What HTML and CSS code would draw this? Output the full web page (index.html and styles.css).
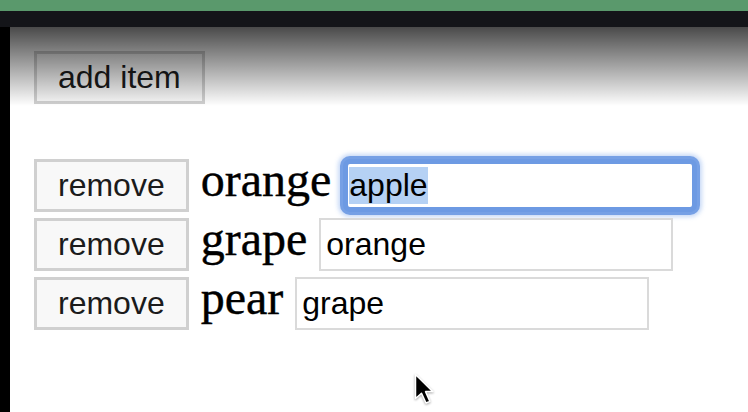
FILE: index.html
```html
<!DOCTYPE html>
<html lang="en">
<head>
<meta charset="utf-8">
<title>List</title>
<link rel="stylesheet" href="styles.css">
</head>
<body>
<div class="topbar"></div>
<div class="toolbar"></div>
<div class="main">
  <div class="sidebar"></div>
  <div class="content">
    <button class="btn">add item</button>
    <ul class="list">
      <li class="row"><button class="btn">remove</button><span class="label">orange</span><input class="field focused" id="first" value="apple"></li>
      <li class="row"><button class="btn">remove</button><span class="label">grape</span><input class="field" value="orange"></li>
      <li class="row"><button class="btn">remove</button><span class="label">pear</span><input class="field" value="grape"></li>
    </ul>
  </div>
  <div class="shade"></div>
  <svg class="cursor" width="21" height="33" viewBox="-1 -1 14 22">
    <path d="M0 0 L0 16 L4 12.5 L7 19 L9.6 17.9 L6.7 11.4 L11.6 11.4 Z" fill="#000" stroke="#fff" stroke-width="1" stroke-linejoin="round"/>
  </svg>
</div>
<script src="script.js"></script>
</body>
</html>
```

FILE: styles.css
```css
* { box-sizing: border-box; }
html, body { margin: 0; padding: 0; }
body {
  width: 748px;
  height: 412px;
  overflow: hidden;
  background: #fff;
  font-family: "Liberation Sans", Arial, sans-serif;
}
.topbar { height: 11px; background: #5a996c; }
.toolbar { height: 16px; background: #141519; }
.main {
  position: relative;
  display: flex;
  height: 385px;
}
.sidebar { width: 10px; background: #000; flex: none; }
.content {
  flex: 1;
  padding: 24px 24px 0 24px;
}
.btn {
  display: block;
  height: 53px;
  margin: 0;
  padding: 0 21px;
  border: 3px solid #d0d0d0;
  border-radius: 0;
  background: #f8f8f8;
  color: #1b1b1b;
  font-family: "Liberation Sans", Arial, sans-serif;
  font-size: 32px;
  line-height: 37px;
}
.list {
  list-style: none;
  margin: 55px 0 0 0;
  padding: 0;
  display: flex;
  flex-direction: column;
  gap: 6px;
}
.row {
  display: flex;
  align-items: baseline;
  gap: 12px;
}
.label {
  font-family: "Liberation Serif", "Times New Roman", serif;
  font-size: 48px;
  line-height: 40px;
  color: #000;
  -webkit-text-stroke: 0.4px #000;
}
.field {
  width: 354px;
  height: 53px;
  margin: 0;
  padding: 0 5px;
  border: 2px solid #dadada;
  border-radius: 0;
  background: #fff;
  color: #000;
  font-family: "Liberation Sans", Arial, sans-serif;
  font-size: 32px;
  line-height: 37px;
  outline: none;
}
.field.focused {
  border: 5px solid #6d9ae3;
  border-radius: 7px;
  padding: 0 1px;
  box-shadow: 0 0 0 3px #76a0e5, 0 0 4px 5px rgba(130, 170, 235, 0.45);
}
.field.focused::selection { background: #b5d1f4; color: #000; }
.shade {
  position: absolute;
  left: 10px;
  right: 0;
  top: 0;
  height: 79px;
  background: linear-gradient(to bottom, rgba(0,0,0,0.71), rgba(0,0,0,0));
  pointer-events: none;
}
.cursor {
  position: absolute;
  left: 414px;
  top: 346px;
  filter: drop-shadow(0 1px 1px rgba(0,0,0,0.35));
}
```

FILE: script.js
```js
var f = document.getElementById('first');
f.focus();
f.setSelectionRange(0, f.value.length);
```
